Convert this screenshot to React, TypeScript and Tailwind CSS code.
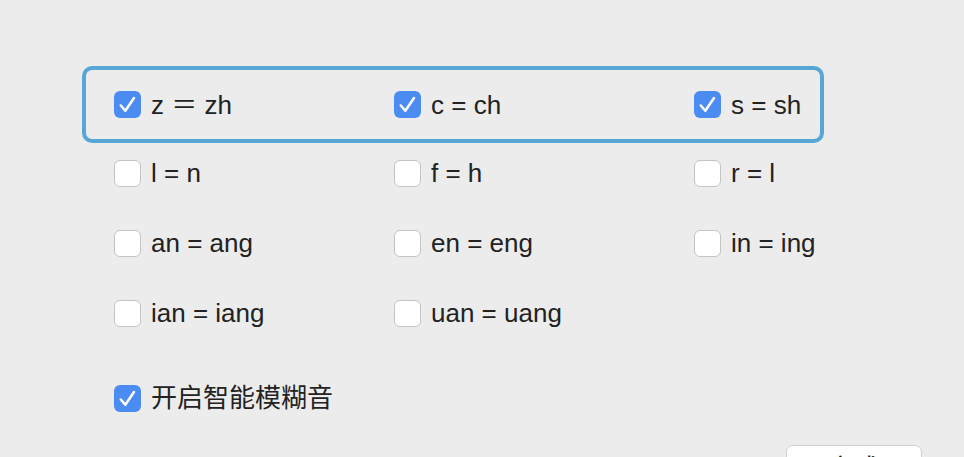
import React, { useState } from 'react';

type Item = { label: string; checked: boolean };

const Checkbox: React.FC<{ checked: boolean; onChange: () => void }> = ({ checked, onChange }) => (
  <button
    type="button"
    onClick={onChange}
    className={
      checked
        ? 'w-[27px] h-[27px] rounded-[6px] bg-[#4a8cf1] flex items-center justify-center shrink-0'
        : 'w-[27px] h-[27px] rounded-[6px] bg-white border border-[#c4c4c4] shrink-0'
    }
  >
    {checked && (
      <svg width="21" height="21" viewBox="0 0 20 20" fill="none">
        <path d="M3.6 11 L7.9 16 L16.2 3.8" stroke="white" strokeWidth="2.4" strokeLinecap="round" strokeLinejoin="round" />
      </svg>
    )}
  </button>
);

const Option: React.FC<{ item: Item; onToggle: () => void }> = ({ item, onToggle }) => (
  <label className="flex items-center gap-[10px] cursor-default">
    <Checkbox checked={item.checked} onChange={onToggle} />
    <span className="whitespace-pre text-[26px] leading-none text-[#222222]">{item.label}</span>
  </label>
);

const App: React.FC = () => {
  const [rows, setRows] = useState<Item[][]>([
    [
      { label: 'z ＝ zh', checked: true },
      { label: 'c = ch', checked: true },
      { label: 's = sh', checked: true },
    ],
    [
      { label: 'l = n', checked: false },
      { label: 'f = h', checked: false },
      { label: 'r = l', checked: false },
    ],
    [
      { label: 'an = ang', checked: false },
      { label: 'en = eng', checked: false },
      { label: 'in = ing', checked: false },
    ],
    [
      { label: 'ian = iang', checked: false },
      { label: 'uan = uang', checked: false },
    ],
  ]);
  const [smart, setSmart] = useState(true);

  const toggle = (r: number, c: number) => {
    setRows(prev => prev.map((row, i) => row.map((it, j) => (i === r && j === c ? { ...it, checked: !it.checked } : it))));
  };

  const renderRow = (r: number) => (
    <div className="grid grid-cols-[280px_300px_auto] items-center h-full">
      {rows[r].map((it, c) => (
        <Option key={c} item={it} onToggle={() => toggle(r, c)} />
      ))}
    </div>
  );

  return (
    <div
      className="w-[964px] h-[457px] bg-[#ececec] overflow-hidden pt-[66px] pl-[82px] pr-[42px]"
      style={{ fontFamily: '"Liberation Sans", "Noto Sans CJK SC", sans-serif' }}
    >
      <div className="w-[742px] h-[77px] border-4 border-[#57a7d6] rounded-[10px] pl-[28px]">
        {renderRow(0)}
      </div>
      <div className="flex flex-col gap-[10px] pl-[32px]">
        <div className="h-[60px]">{renderRow(1)}</div>
        <div className="h-[60px]">{renderRow(2)}</div>
        <div className="h-[60px]">{renderRow(3)}</div>
      </div>
      <div className="pl-[32px] mt-[25px] h-[60px] flex items-center">
        <Option item={{ label: '开启智能模糊音', checked: smart }} onToggle={() => setSmart(!smart)} />
      </div>
      <div className="flex justify-end mt-[17px]">
        <button className="w-[136px] h-[44px] bg-white border border-[#cfcfcf] rounded-[7px] text-[26px] text-[#222222] leading-none pt-[4px]">
          完成
        </button>
      </div>
    </div>
  );
};

export default App;
